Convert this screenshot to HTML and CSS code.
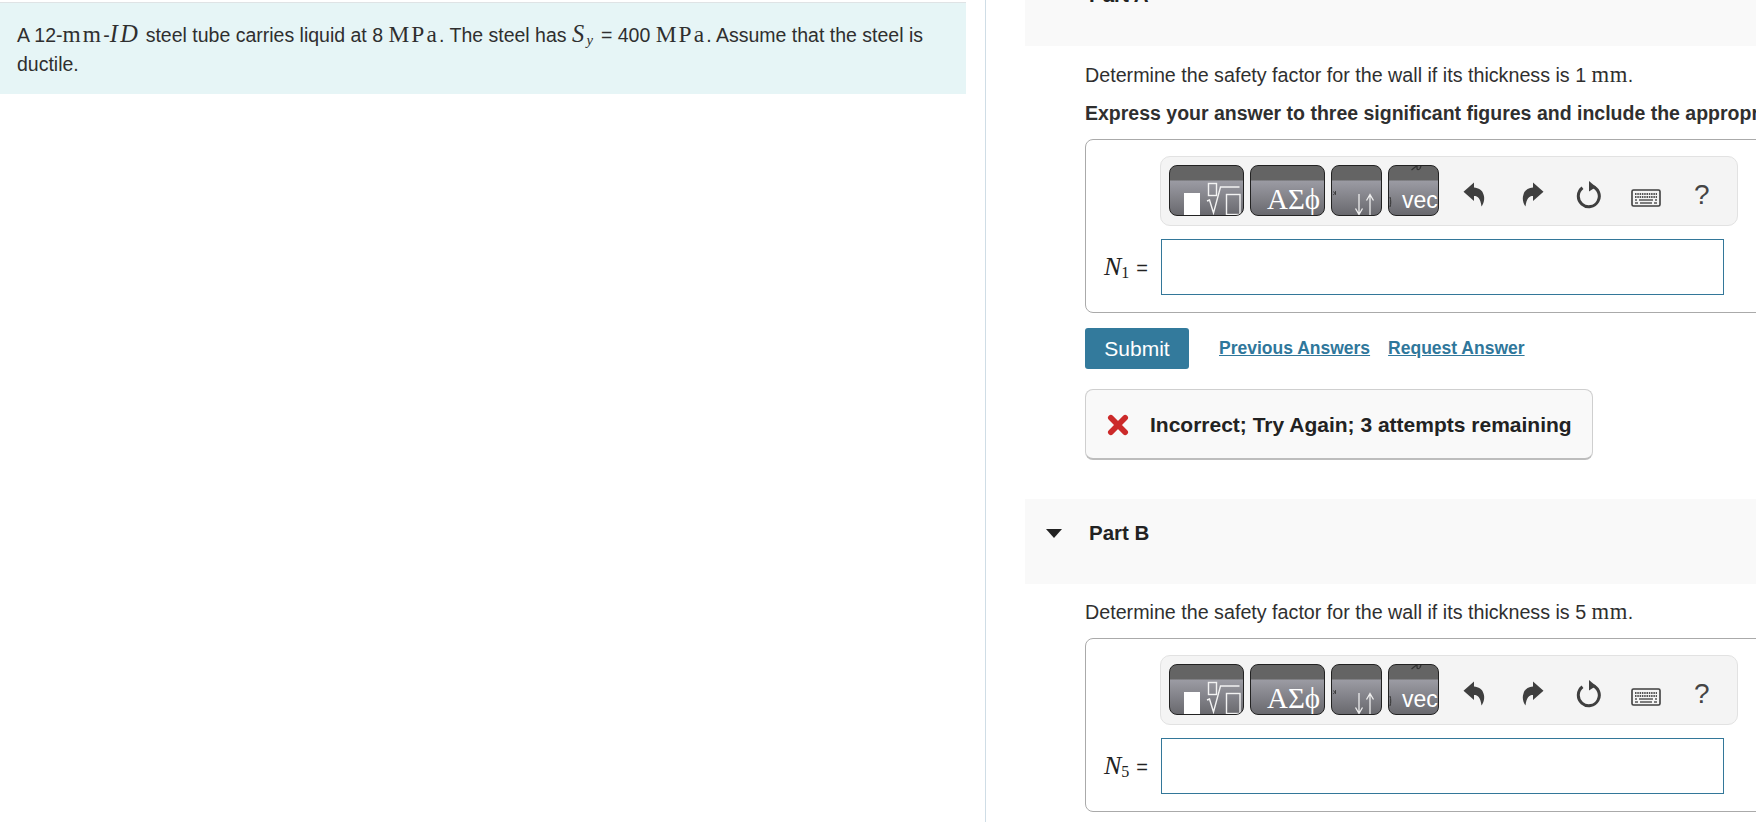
FILE: index.html
```html
<!DOCTYPE html>
<html lang="en">
<head>
<meta charset="utf-8">
<title>Safety factor</title>
<link rel="stylesheet" href="styles.css">
</head>
<body>
<svg class="defs" width="0" height="0" aria-hidden="true">
  <symbol id="templates" viewBox="0 0 73 49">
    <rect x="14" y="27" width="16" height="22" fill="#fff"/>
    <rect x="38.500" y="17.500" width="8" height="12" fill="none" stroke="#f2f2f2" stroke-width="1.400"/>
    <path d="M37 35l2.500 -1 4 13 7 -26h19" fill="none" stroke="#f2f2f2" stroke-width="1.400"/>
    <rect x="56.500" y="28.500" width="13.500" height="20" fill="none" stroke="#f2f2f2" stroke-width="1.400"/>
  </symbol>
  <symbol id="updown" viewBox="0 0 49 49">
    <path d="M1 25.500l2.500 2M3.500 25v4M1 29l2.500-2" stroke="#333" stroke-width=".8" fill="none"/>
    <path d="M27 28v20M23.500 42.500l3.500 6 3.500-6M38 29v20M34.500 34.500l3.500-6 3.500 6" fill="none" stroke="#eee" stroke-width="1.300"/>
  </symbol>
  <symbol id="vecmark" viewBox="0 0 49 49">
    <path d="M22.500 4l5-4M28 0v2.500c0 1.500 2 1.500 3 0l1-2.500" fill="none" stroke="#333" stroke-width="1.300"/>
    <path d="M1 31c1 3 1 7 0 10" fill="none" stroke="#333" stroke-width="1"/>
  </symbol>
  <symbol id="undo" viewBox="0 0 22 26">
    <path d="M11 .5L.5 9.700 11 19v-5c4 0 6.500 2.500 7.500 10.500 2.500-3.500 3.500-8 2-12C19.500 8 15.500 6 11 5.500z" fill="#3f3f3f"/>
  </symbol>
  <symbol id="redo" viewBox="0 0 22 26">
    <path d="M11 .5L21.500 9.700 11 19v-5c-4 0-6.500 2.500-7.500 10.500-2.500-3.500-3.500-8-2-12C2.500 8 6.500 6 11 5.500z" fill="#3f3f3f"/>
  </symbol>
  <symbol id="reset" viewBox="0 0 26 28">
    <path d="M6.500 6.800a10.500 10.500 0 1 0 9.500 -1.600" fill="none" stroke="#3f3f3f" stroke-width="3"/>
    <path d="M13 0l7 6-7 4.500z" fill="#3f3f3f"/>
  </symbol>
  <symbol id="keyboard" viewBox="0 0 30 18">
    <rect x="1" y="1" width="28" height="16" rx="1.500" fill="#f4f4f4" stroke="#3f3f3f" stroke-width="1.600"/>
    <path d="M4 5h22M4 8h22" stroke="#555" stroke-width="1.800" stroke-dasharray="1.500 .8"/>
    <path d="M4 11h2M8 11h14M24 11h2M4 14h3M9 14h12M23 14h3" stroke="#555" stroke-width="1.500"/>
  </symbol>
</svg>

<div class="page">
  <aside class="problem">
    <div class="intro">
      <p>A 12-<span class="rm">mm</span>-<i class="mi">ID</i> steel tube carries liquid at 8 <span class="rm">MPa</span>. The steel has <i class="mi">S<sub>y</sub></i> = 400 <span class="rm">MPa</span>. Assume that the steel is <span class="line">ductile.</span></p>
    </div>
  </aside>

  <main class="parts">
    <section class="part">
      <header class="part-head">
        <span class="caret"></span><h2>Part A</h2>
      </header>
      <div class="part-body">
        <p class="prompt">Determine the safety factor for the wall if its thickness is 1 <span class="rm">mm</span>.</p>
        <p class="instruct">Express your answer to three significant figures and include the appropriate units.</p>
        <div class="answer">
          <div class="toolbar">
            <div class="tool wide"><svg class="tool-art"><use href="#templates"/></svg></div>
            <div class="tool wide greek">ΑΣϕ</div>
            <div class="tool narrow"><svg class="tool-art"><use href="#updown"/></svg></div>
            <div class="tool narrow vec"><svg class="tool-mark"><use href="#vecmark"/></svg>vec</div>
            <div class="actions">
              <svg class="ic ic-undo"><use href="#undo"/></svg>
              <svg class="ic ic-redo"><use href="#redo"/></svg>
              <svg class="ic ic-reset"><use href="#reset"/></svg>
              <svg class="ic ic-kbd"><use href="#keyboard"/></svg>
              <span class="help">?</span>
            </div>
          </div>
          <div class="entry">
            <label class="var"><i>N</i><sub>1</sub><span class="eq">=</span></label>
            <div class="field"></div>
          </div>
        </div>
        <div class="controls">
          <button class="submit" type="button">Submit</button>
          <a class="link first" href="#">Previous Answers</a>
          <a class="link" href="#">Request Answer</a>
        </div>
        <div class="feedback">
          <svg class="cross" viewBox="0 0 20 20"><path d="M3.500 3.500l13 13M16.500 3.500l-13 13" stroke="#cc2a2a" stroke-width="5.200" stroke-linecap="round"/></svg>
          <span>Incorrect; Try Again; 3 attempts remaining</span>
        </div>
      </div>
    </section>

    <section class="part part-b">
      <header class="part-head">
        <span class="caret"></span><h2>Part B</h2>
      </header>
      <div class="part-body">
        <p class="prompt prompt-b">Determine the safety factor for the wall if its thickness is 5 <span class="rm">mm</span>.</p>
        <div class="answer">
          <div class="toolbar">
            <div class="tool wide"><svg class="tool-art"><use href="#templates"/></svg></div>
            <div class="tool wide greek">ΑΣϕ</div>
            <div class="tool narrow"><svg class="tool-art"><use href="#updown"/></svg></div>
            <div class="tool narrow vec"><svg class="tool-mark"><use href="#vecmark"/></svg>vec</div>
            <div class="actions">
              <svg class="ic ic-undo"><use href="#undo"/></svg>
              <svg class="ic ic-redo"><use href="#redo"/></svg>
              <svg class="ic ic-reset"><use href="#reset"/></svg>
              <svg class="ic ic-kbd"><use href="#keyboard"/></svg>
              <span class="help">?</span>
            </div>
          </div>
          <div class="entry">
            <label class="var"><i>N</i><sub>5</sub><span class="eq">=</span></label>
            <div class="field"></div>
          </div>
        </div>
      </div>
    </section>
  </main>
</div>
</body>
</html>
```
FILE: styles.css
```css
* { box-sizing: border-box; }
html, body { margin: 0; height: 100%; overflow: hidden; }
body {
  font-family: "Liberation Sans", Arial, sans-serif;
  color: #2f2f2f;
  background: #fff;
  font-size: 18px;
}
.defs { display: block; height: 0; }
.page { display: flex; height: 822px; overflow: hidden; }

.problem {
  width: 986px;
  flex: none;
  border-right: 1px solid #cfdde6;
  padding: 2px 19px 0 0;
}
.intro {
  background: #e6f5f6;
  border-top: 1px solid #dfe3e5;
  height: 92px;
  padding: 18px 17px 0;
}
.intro p {
  margin: 0;
  font-size: 19.500px;
  line-height: 29px;
  width: 925px;
}
.line { display: block; }
.rm {
  font-family: "Liberation Serif", serif;
  font-size: 1.15em;
  letter-spacing: .02em;
  line-height: 1;
}
.intro .rm { font-size: 1.2em; letter-spacing: .09em; }
.mi {
  font-family: "Liberation Serif", serif;
  font-size: 1.25em;
  letter-spacing: .1em;
  line-height: 1;
}
.mi sub { font-size: .6em; line-height: 0; vertical-align: -3px; }

.parts { flex: 1; min-width: 0; overflow: hidden; padding-left: 39px; }
.part { margin-top: -39px; }
.part-b { margin-top: 39px; }
.part-head {
  height: 85px;
  background: #f9f9f9;
  display: flex;
  align-items: flex-start;
  padding: 23px 0 0 21px;
}
.caret {
  width: 16px;
  height: 9px;
  margin-top: 7px;
  background: #222;
  clip-path: polygon(0 0, 100% 0, 50% 100%);
}
.part-head h2 {
  margin: 0 0 0 27px;
  font-size: 20.500px;
  line-height: 22px;
  font-weight: 700;
  color: #222;
}
.part-body { padding-left: 60px; width: 860px; }
.prompt { margin: 16px 0 0; height: 24px; padding-top: 1px; font-size: 19.700px; line-height: 24px; white-space: nowrap; }
.prompt-b { margin-top: 15px; }
.instruct { margin: 15px 0 0; height: 24px; font-size: 19.500px; line-height: 24px; font-weight: 700; white-space: nowrap; }

.answer {
  margin-top: 14px;
  height: 174px;
  border: 1px solid #aaa;
  border-radius: 8px;
  padding: 16px 0 0 74px;
}
.prompt-b + .answer { margin-top: 15px; }
.toolbar {
  width: 578px;
  height: 70px;
  background: #f4f4f4;
  border: 1px solid #e2e2e2;
  border-radius: 10px;
  padding: 8px 0 0 8px;
  display: flex;
  align-items: flex-start;
  gap: 6px;
}
.tool {
  position: relative;
  height: 51px;
  border: 1px solid #222;
  border-radius: 8px;
  background: linear-gradient(#646464 0 14px, #9b9ba3 15px, #69696e 100%);
  color: #fff;
  overflow: hidden;
  flex: none;
}
.wide { width: 75px; }
.narrow { width: 51px; }
.tool-art { width: 100%; height: 49px; display: block; }
.tool-mark { position: absolute; left: 0; top: 0; width: 49px; height: 49px; }
.greek {
  font-family: "Liberation Serif", serif;
  font-size: 29px;
  line-height: 34px;
  padding: 16px 0 0 16px;
  white-space: nowrap;
}
.vec { font-size: 23px; line-height: 26px; padding: 21px 0 0 13px; }

.actions {
  flex: 1;
  display: flex;
  align-items: center;
  height: 51px;
  padding: 8px 0 0 18px;
}
.ic { display: block; flex: none; }
.ic-undo { width: 22px; height: 26px; }
.ic-redo { width: 22px; height: 26px; margin-left: 37px; }
.ic-reset { width: 26px; height: 28px; margin-left: 32px; }
.ic-kbd { width: 30px; height: 18px; margin: 7px 0 0 29px; }
.help { margin-left: 33px; font-size: 28px; line-height: 30px; color: #444; }

.entry { display: flex; align-items: center; margin-top: 13px; margin-left: -74px; }
.var {
  width: 75px;
  padding-right: 13px;
  text-align: right;
  font-family: "Liberation Serif", serif;
  font-size: 26px;
  line-height: 30px;
  white-space: nowrap;
  color: #222;
}
.var sub { font-size: 16px; line-height: 0; vertical-align: -3px; }
.eq { font-family: "Liberation Sans", Arial, sans-serif; font-size: 20px; margin-left: 7px; }
.field {
  width: 563px;
  height: 56px;
  border: 1px solid #337799;
  background: #fff;
  flex: none;
}

.controls { display: flex; align-items: center; margin-top: 15px; }
.submit {
  width: 104px;
  height: 41px;
  background: #337a9c;
  color: #fff;
  border: 0;
  border-radius: 3px;
  font: 21px "Liberation Sans", Arial, sans-serif;
  padding: 0;
}
.link {
  color: #2f779b;
  font-size: 17.500px;
  font-weight: 700;
  margin-left: 18px;
}
.link.first { margin-left: 30px; }
.feedback {
  margin-top: 20px;
  width: 508px;
  height: 71px;
  background: #f9f9f9;
  border: 1px solid #cfcfcf;
  border-bottom: 2px solid #bdbdbd;
  border-radius: 8px;
  display: flex;
  align-items: center;
  padding: 1px 0 0 21px;
  font-size: 21px;
  font-weight: 700;
  color: #222;
  white-space: nowrap;
}
.cross { width: 22px; height: 22px; margin-right: 21px; flex: none; }
```
